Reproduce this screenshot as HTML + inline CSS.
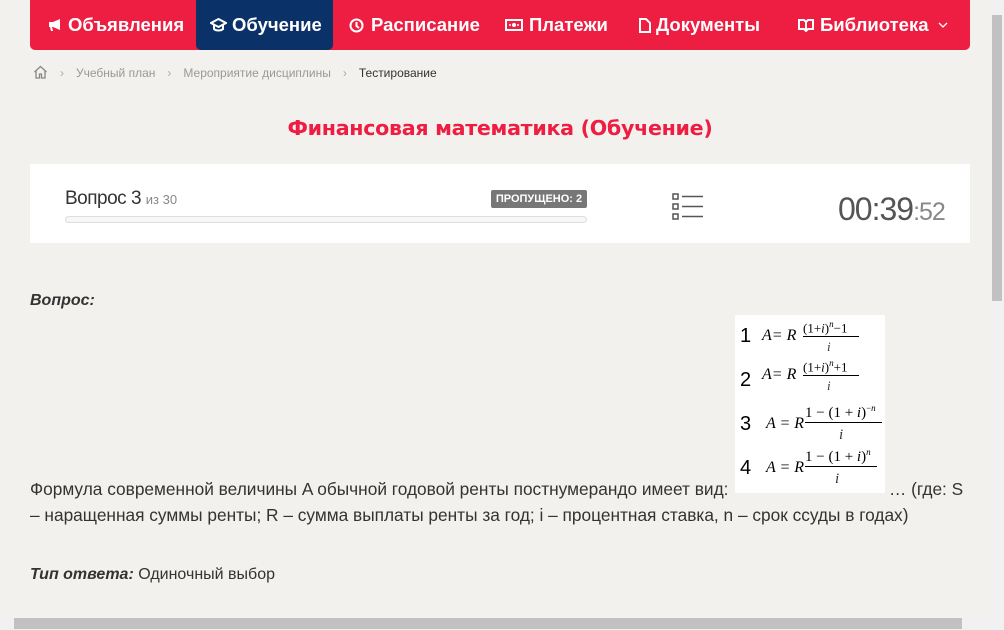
<!DOCTYPE html>
<html><head><meta charset="utf-8"><style>
*{margin:0;padding:0;box-sizing:border-box}
html,body{width:1004px;height:630px;overflow:hidden;background:#f2f1ee;font-family:"Liberation Sans",sans-serif;color:#333}
.abs{position:absolute}
.nav{left:30px;top:0;width:940px;height:50px;background:#ee1d42;border-radius:0 0 5px 5px}
.ni{position:absolute;top:0;height:50px;line-height:50px;color:#fff;font-family:"Liberation Sans",sans-serif;font-size:18.5px;font-weight:bold;white-space:nowrap}
.ni svg{position:absolute;top:18px}
.act{left:166px;width:137px;background:#0b3268;border-radius:0 0 5px 5px}
.bc{top:65px;font-size:12px;color:#999;white-space:nowrap}
.bc span.sep{color:#aaa;margin:0 12px}
.q{font-size:17.3px;line-height:26px;color:#333;white-space:nowrap}
</style></head><body>
<div class="abs nav">
 <div class="ni" style="left:0;width:160px"><svg style="left:18px" width="15" height="14" viewBox="0 0 15 14"><path d="M1 4h4l7-3v11l-7-3H4l1 4H3L2 9H1z" fill="#fff"/></svg><span style="position:absolute;left:38px">Объявления</span></div>
 <div class="ni act"><svg style="left:14px" width="17" height="14" viewBox="0 0 17 14"><path d="M8.5 1L1 5l7.5 4L16 5z" fill="none" stroke="#fff" stroke-width="2"/><path d="M4 7v4c2 2 7 2 9 0V7" fill="none" stroke="#fff" stroke-width="2"/></svg><span style="position:absolute;left:36px">Обучение</span></div>
 <div class="ni" style="left:319px"><svg width="15" height="15" viewBox="0 0 15 15"><circle cx="7.5" cy="7.5" r="6" fill="none" stroke="#fff" stroke-width="2"/><path d="M7.5 4v4l2.5 2" fill="none" stroke="#fff" stroke-width="2"/></svg><span style="position:absolute;left:22px">Расписание</span></div>
 <div class="ni" style="left:475px"><svg width="18" height="12" viewBox="0 0 18 12" style="top:19px"><rect x="1" y="1" width="16" height="10" fill="none" stroke="#fff" stroke-width="2"/><circle cx="9" cy="6" r="2" fill="#fff"/><circle cx="5" cy="6" r="1" fill="#fff"/><circle cx="13" cy="6" r="1" fill="#fff"/></svg><span style="position:absolute;left:24px">Платежи</span></div>
 <div class="ni" style="left:609px"><svg width="12" height="15" viewBox="0 0 12 15"><path d="M1 1h6l4 4v9H1z" fill="none" stroke="#fff" stroke-width="2"/></svg><span style="position:absolute;left:17px">Документы</span></div>
 <div class="ni" style="left:768px"><svg width="16" height="14" viewBox="0 0 16 14"><path d="M1 2h5l2 2 2-2h5v9h-5l-2 2-2-2H1z M8 4v8" fill="none" stroke="#fff" stroke-width="2"/></svg><span style="position:absolute;left:22px">Библиотека</span><svg style="left:140px;top:22px" width="10" height="6" viewBox="0 0 10 6"><path d="M1 1l4 4 4-4" fill="none" stroke="#fff" stroke-width="1.3"/></svg></div>
</div>
<div class="abs bc" style="left:33px"><svg width="15" height="14" viewBox="0 0 15 14" style="vertical-align:-2px"><path d="M1.5 7L7.5 1.5 13.5 7M3 6v7h3.5V9h2v4H12V6" fill="none" stroke="#888" stroke-width="1.3"/></svg><span class="sep">›</span>Учебный план<span class="sep">›</span>Мероприятие дисциплины<span class="sep">›</span><span style="color:#333">Тестирование</span></div>
<div class="abs" style="left:0;width:1000px;top:116px;text-align:center;font-family:'DejaVu Sans','Liberation Sans',sans-serif;font-weight:bold;font-size:20.6px;color:#ee1d42;letter-spacing:-0.3px">Финансовая математика (Обучение)</div>
<div class="abs" style="left:30px;top:164px;width:940px;height:79px;background:#fff"></div>
<div class="abs" style="left:65px;top:188px;font-size:19px;color:#333;letter-spacing:-0.5px">Вопрос 3 <span style="font-size:13px;color:#888;letter-spacing:0">из 30</span></div>
<div class="abs" style="left:491px;top:190px;width:96px;height:18px;background:#777;color:#fff;font-size:11px;font-weight:bold;line-height:18px;text-align:center;border-radius:2px">ПРОПУЩЕНО: 2</div>
<div class="abs" style="left:65px;top:216px;width:522px;height:7px;border:1px solid #ddd;border-radius:4px;background:#f7f7f7"></div>
<svg class="abs" style="left:672px;top:193px" width="32" height="27" viewBox="0 0 32 27"><g fill="none" stroke="#555" stroke-width="1.5"><rect x="1" y="1" width="5" height="5"/><rect x="1" y="11" width="5" height="5"/><rect x="1" y="21" width="5" height="5"/><path d="M10 3.5h21M10 13.5h21M10 23.5h21"/></g></svg>
<div class="abs" style="left:838px;top:191px;font-size:32px;color:#555;letter-spacing:-1px">00:39<span style="font-size:25px;color:#888">:52</span></div>
<div class="abs q" style="left:30px;top:288px;font-weight:bold;font-style:italic;font-size:16px">Вопрос:</div>
<div class="abs" style="left:735px;top:315px;width:150px;height:178px;background:#fff;font-family:'Liberation Serif',serif">
 <div class="abs" style="left:5px;top:10px;font-family:'Liberation Sans';font-size:20px;color:#000">1</div>
 <div class="abs" style="left:5px;top:54px;font-family:'Liberation Sans';font-size:20px;color:#000">2</div>
 <div class="abs" style="left:5px;top:98px;font-family:'Liberation Sans';font-size:20px;color:#000">3</div>
 <div class="abs" style="left:5px;top:142px;font-family:'Liberation Sans';font-size:20px;color:#000">4</div>
 <div class="abs" style="left:27px;top:12px;font-size:16px;font-style:italic;color:#000">A= R</div>
 <div class="abs" style="left:68px;top:4px;font-size:13px;color:#000;border-bottom:1px solid #000;width:56px">(1+<i>i</i>)<sup style="font-size:9px"><i>n</i></sup>−1</div>
 <div class="abs" style="left:92px;top:24px;font-size:13px;font-style:italic">i</div>
 <div class="abs" style="left:27px;top:51px;font-size:16px;font-style:italic;color:#000">A= R</div>
 <div class="abs" style="left:68px;top:43px;font-size:13px;color:#000;border-bottom:1px solid #000;width:56px">(1+<i>i</i>)<sup style="font-size:9px"><i>n</i></sup>+1</div>
 <div class="abs" style="left:92px;top:63px;font-size:13px;font-style:italic">i</div>
 <div class="abs" style="left:31px;top:100px;font-size:16px;font-style:italic;color:#000">A = R</div>
 <div class="abs" style="left:70px;top:88px;font-size:15px;color:#000;border-bottom:1px solid #000;width:77px">1 − (1 + <i>i</i>)<sup style="font-size:9px">−<i>n</i></sup></div>
 <div class="abs" style="left:104px;top:112px;font-size:15px;font-style:italic">i</div>
 <div class="abs" style="left:31px;top:144px;font-size:16px;font-style:italic;color:#000">A = R</div>
 <div class="abs" style="left:70px;top:132px;font-size:15px;color:#000;border-bottom:1px solid #000;width:72px">1 − (1 + <i>i</i>)<sup style="font-size:9px"><i>n</i></sup></div>
 <div class="abs" style="left:100px;top:156px;font-size:15px;font-style:italic">i</div>
</div>
<div class="abs q" style="left:30px;top:476px">Формула современной величины A обычной годовой ренты постнумерандо имеет вид:</div>
<div class="abs q" style="left:889px;top:476px">… (где: S</div>
<div class="abs q" style="left:30px;top:502px">– наращенная суммы ренты; R – сумма выплаты ренты за год; i – процентная ставка, n – срок ссуды в годах)</div>
<div class="abs q" style="left:30px;top:562px;font-size:16px"><b><i>Тип ответа:</i></b> Одиночный выбор</div>
<div class="abs" style="left:990px;top:0;width:14px;height:617px;background:#f1f1f1"></div>
<div class="abs" style="left:992px;top:15px;width:10px;height:286px;background:#c1c1c1"></div>
<div class="abs" style="left:0;top:617px;width:1004px;height:13px;background:#f1f1f1"></div>
<div class="abs" style="left:14px;top:618px;width:948px;height:11px;background:#c1c1c1"></div>
</body></html>
